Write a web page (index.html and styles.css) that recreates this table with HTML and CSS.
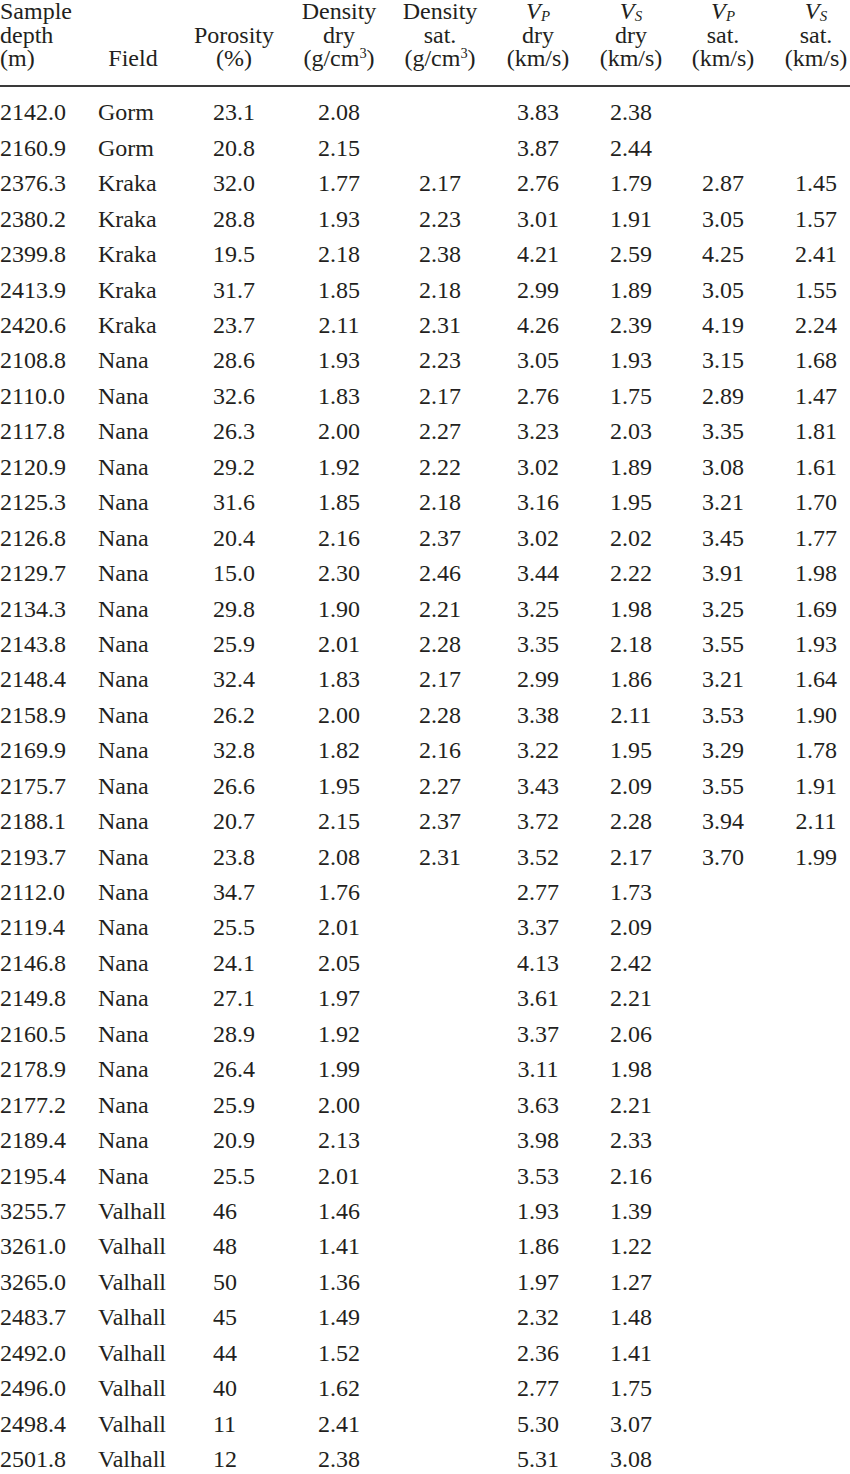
FILE: index.html
```html
<!DOCTYPE html>
<html>
<head>
<meta charset="utf-8">
<link rel="stylesheet" href="styles.css">
</head>
<body>
<div class="table">
  <div class="row head">
    <div class="c c1">Sample<br>depth<br>(m)</div>
    <div class="c c2">Field</div>
    <div class="c c3">Porosity<br>(%)</div>
    <div class="c c4">Density<br>dry<br>(g/cm<sup>3</sup>)</div>
    <div class="c c5">Density<br>sat.<br>(g/cm<sup>3</sup>)</div>
    <div class="c c6"><i>V</i><sub>P</sub><br>dry<br>(km/s)</div>
    <div class="c c7"><i>V</i><sub>S</sub><br>dry<br>(km/s)</div>
    <div class="c c8"><i>V</i><sub>P</sub><br>sat.<br>(km/s)</div>
    <div class="c c9"><i>V</i><sub>S</sub><br>sat.<br>(km/s)</div>
  </div>
  <div class="rule"></div>
  <div class="body">
    <div class="row"><div class="c c1">2142.0</div><div class="c c2">Gorm</div><div class="c c3">23.1</div><div class="c c4">2.08</div><div class="c c5"></div><div class="c c6">3.83</div><div class="c c7">2.38</div><div class="c c8"></div><div class="c c9"></div></div>
    <div class="row"><div class="c c1">2160.9</div><div class="c c2">Gorm</div><div class="c c3">20.8</div><div class="c c4">2.15</div><div class="c c5"></div><div class="c c6">3.87</div><div class="c c7">2.44</div><div class="c c8"></div><div class="c c9"></div></div>
    <div class="row"><div class="c c1">2376.3</div><div class="c c2">Kraka</div><div class="c c3">32.0</div><div class="c c4">1.77</div><div class="c c5">2.17</div><div class="c c6">2.76</div><div class="c c7">1.79</div><div class="c c8">2.87</div><div class="c c9">1.45</div></div>
    <div class="row"><div class="c c1">2380.2</div><div class="c c2">Kraka</div><div class="c c3">28.8</div><div class="c c4">1.93</div><div class="c c5">2.23</div><div class="c c6">3.01</div><div class="c c7">1.91</div><div class="c c8">3.05</div><div class="c c9">1.57</div></div>
    <div class="row"><div class="c c1">2399.8</div><div class="c c2">Kraka</div><div class="c c3">19.5</div><div class="c c4">2.18</div><div class="c c5">2.38</div><div class="c c6">4.21</div><div class="c c7">2.59</div><div class="c c8">4.25</div><div class="c c9">2.41</div></div>
    <div class="row"><div class="c c1">2413.9</div><div class="c c2">Kraka</div><div class="c c3">31.7</div><div class="c c4">1.85</div><div class="c c5">2.18</div><div class="c c6">2.99</div><div class="c c7">1.89</div><div class="c c8">3.05</div><div class="c c9">1.55</div></div>
    <div class="row"><div class="c c1">2420.6</div><div class="c c2">Kraka</div><div class="c c3">23.7</div><div class="c c4">2.11</div><div class="c c5">2.31</div><div class="c c6">4.26</div><div class="c c7">2.39</div><div class="c c8">4.19</div><div class="c c9">2.24</div></div>
    <div class="row"><div class="c c1">2108.8</div><div class="c c2">Nana</div><div class="c c3">28.6</div><div class="c c4">1.93</div><div class="c c5">2.23</div><div class="c c6">3.05</div><div class="c c7">1.93</div><div class="c c8">3.15</div><div class="c c9">1.68</div></div>
    <div class="row"><div class="c c1">2110.0</div><div class="c c2">Nana</div><div class="c c3">32.6</div><div class="c c4">1.83</div><div class="c c5">2.17</div><div class="c c6">2.76</div><div class="c c7">1.75</div><div class="c c8">2.89</div><div class="c c9">1.47</div></div>
    <div class="row"><div class="c c1">2117.8</div><div class="c c2">Nana</div><div class="c c3">26.3</div><div class="c c4">2.00</div><div class="c c5">2.27</div><div class="c c6">3.23</div><div class="c c7">2.03</div><div class="c c8">3.35</div><div class="c c9">1.81</div></div>
    <div class="row"><div class="c c1">2120.9</div><div class="c c2">Nana</div><div class="c c3">29.2</div><div class="c c4">1.92</div><div class="c c5">2.22</div><div class="c c6">3.02</div><div class="c c7">1.89</div><div class="c c8">3.08</div><div class="c c9">1.61</div></div>
    <div class="row"><div class="c c1">2125.3</div><div class="c c2">Nana</div><div class="c c3">31.6</div><div class="c c4">1.85</div><div class="c c5">2.18</div><div class="c c6">3.16</div><div class="c c7">1.95</div><div class="c c8">3.21</div><div class="c c9">1.70</div></div>
    <div class="row"><div class="c c1">2126.8</div><div class="c c2">Nana</div><div class="c c3">20.4</div><div class="c c4">2.16</div><div class="c c5">2.37</div><div class="c c6">3.02</div><div class="c c7">2.02</div><div class="c c8">3.45</div><div class="c c9">1.77</div></div>
    <div class="row"><div class="c c1">2129.7</div><div class="c c2">Nana</div><div class="c c3">15.0</div><div class="c c4">2.30</div><div class="c c5">2.46</div><div class="c c6">3.44</div><div class="c c7">2.22</div><div class="c c8">3.91</div><div class="c c9">1.98</div></div>
    <div class="row"><div class="c c1">2134.3</div><div class="c c2">Nana</div><div class="c c3">29.8</div><div class="c c4">1.90</div><div class="c c5">2.21</div><div class="c c6">3.25</div><div class="c c7">1.98</div><div class="c c8">3.25</div><div class="c c9">1.69</div></div>
    <div class="row"><div class="c c1">2143.8</div><div class="c c2">Nana</div><div class="c c3">25.9</div><div class="c c4">2.01</div><div class="c c5">2.28</div><div class="c c6">3.35</div><div class="c c7">2.18</div><div class="c c8">3.55</div><div class="c c9">1.93</div></div>
    <div class="row"><div class="c c1">2148.4</div><div class="c c2">Nana</div><div class="c c3">32.4</div><div class="c c4">1.83</div><div class="c c5">2.17</div><div class="c c6">2.99</div><div class="c c7">1.86</div><div class="c c8">3.21</div><div class="c c9">1.64</div></div>
    <div class="row"><div class="c c1">2158.9</div><div class="c c2">Nana</div><div class="c c3">26.2</div><div class="c c4">2.00</div><div class="c c5">2.28</div><div class="c c6">3.38</div><div class="c c7">2.11</div><div class="c c8">3.53</div><div class="c c9">1.90</div></div>
    <div class="row"><div class="c c1">2169.9</div><div class="c c2">Nana</div><div class="c c3">32.8</div><div class="c c4">1.82</div><div class="c c5">2.16</div><div class="c c6">3.22</div><div class="c c7">1.95</div><div class="c c8">3.29</div><div class="c c9">1.78</div></div>
    <div class="row"><div class="c c1">2175.7</div><div class="c c2">Nana</div><div class="c c3">26.6</div><div class="c c4">1.95</div><div class="c c5">2.27</div><div class="c c6">3.43</div><div class="c c7">2.09</div><div class="c c8">3.55</div><div class="c c9">1.91</div></div>
    <div class="row"><div class="c c1">2188.1</div><div class="c c2">Nana</div><div class="c c3">20.7</div><div class="c c4">2.15</div><div class="c c5">2.37</div><div class="c c6">3.72</div><div class="c c7">2.28</div><div class="c c8">3.94</div><div class="c c9">2.11</div></div>
    <div class="row"><div class="c c1">2193.7</div><div class="c c2">Nana</div><div class="c c3">23.8</div><div class="c c4">2.08</div><div class="c c5">2.31</div><div class="c c6">3.52</div><div class="c c7">2.17</div><div class="c c8">3.70</div><div class="c c9">1.99</div></div>
    <div class="row"><div class="c c1">2112.0</div><div class="c c2">Nana</div><div class="c c3">34.7</div><div class="c c4">1.76</div><div class="c c5"></div><div class="c c6">2.77</div><div class="c c7">1.73</div><div class="c c8"></div><div class="c c9"></div></div>
    <div class="row"><div class="c c1">2119.4</div><div class="c c2">Nana</div><div class="c c3">25.5</div><div class="c c4">2.01</div><div class="c c5"></div><div class="c c6">3.37</div><div class="c c7">2.09</div><div class="c c8"></div><div class="c c9"></div></div>
    <div class="row"><div class="c c1">2146.8</div><div class="c c2">Nana</div><div class="c c3">24.1</div><div class="c c4">2.05</div><div class="c c5"></div><div class="c c6">4.13</div><div class="c c7">2.42</div><div class="c c8"></div><div class="c c9"></div></div>
    <div class="row"><div class="c c1">2149.8</div><div class="c c2">Nana</div><div class="c c3">27.1</div><div class="c c4">1.97</div><div class="c c5"></div><div class="c c6">3.61</div><div class="c c7">2.21</div><div class="c c8"></div><div class="c c9"></div></div>
    <div class="row"><div class="c c1">2160.5</div><div class="c c2">Nana</div><div class="c c3">28.9</div><div class="c c4">1.92</div><div class="c c5"></div><div class="c c6">3.37</div><div class="c c7">2.06</div><div class="c c8"></div><div class="c c9"></div></div>
    <div class="row"><div class="c c1">2178.9</div><div class="c c2">Nana</div><div class="c c3">26.4</div><div class="c c4">1.99</div><div class="c c5"></div><div class="c c6">3.11</div><div class="c c7">1.98</div><div class="c c8"></div><div class="c c9"></div></div>
    <div class="row"><div class="c c1">2177.2</div><div class="c c2">Nana</div><div class="c c3">25.9</div><div class="c c4">2.00</div><div class="c c5"></div><div class="c c6">3.63</div><div class="c c7">2.21</div><div class="c c8"></div><div class="c c9"></div></div>
    <div class="row"><div class="c c1">2189.4</div><div class="c c2">Nana</div><div class="c c3">20.9</div><div class="c c4">2.13</div><div class="c c5"></div><div class="c c6">3.98</div><div class="c c7">2.33</div><div class="c c8"></div><div class="c c9"></div></div>
    <div class="row"><div class="c c1">2195.4</div><div class="c c2">Nana</div><div class="c c3">25.5</div><div class="c c4">2.01</div><div class="c c5"></div><div class="c c6">3.53</div><div class="c c7">2.16</div><div class="c c8"></div><div class="c c9"></div></div>
    <div class="row"><div class="c c1">3255.7</div><div class="c c2">Valhall</div><div class="c c3">46</div><div class="c c4">1.46</div><div class="c c5"></div><div class="c c6">1.93</div><div class="c c7">1.39</div><div class="c c8"></div><div class="c c9"></div></div>
    <div class="row"><div class="c c1">3261.0</div><div class="c c2">Valhall</div><div class="c c3">48</div><div class="c c4">1.41</div><div class="c c5"></div><div class="c c6">1.86</div><div class="c c7">1.22</div><div class="c c8"></div><div class="c c9"></div></div>
    <div class="row"><div class="c c1">3265.0</div><div class="c c2">Valhall</div><div class="c c3">50</div><div class="c c4">1.36</div><div class="c c5"></div><div class="c c6">1.97</div><div class="c c7">1.27</div><div class="c c8"></div><div class="c c9"></div></div>
    <div class="row"><div class="c c1">2483.7</div><div class="c c2">Valhall</div><div class="c c3">45</div><div class="c c4">1.49</div><div class="c c5"></div><div class="c c6">2.32</div><div class="c c7">1.48</div><div class="c c8"></div><div class="c c9"></div></div>
    <div class="row"><div class="c c1">2492.0</div><div class="c c2">Valhall</div><div class="c c3">44</div><div class="c c4">1.52</div><div class="c c5"></div><div class="c c6">2.36</div><div class="c c7">1.41</div><div class="c c8"></div><div class="c c9"></div></div>
    <div class="row"><div class="c c1">2496.0</div><div class="c c2">Valhall</div><div class="c c3">40</div><div class="c c4">1.62</div><div class="c c5"></div><div class="c c6">2.77</div><div class="c c7">1.75</div><div class="c c8"></div><div class="c c9"></div></div>
    <div class="row"><div class="c c1">2498.4</div><div class="c c2">Valhall</div><div class="c c3">11</div><div class="c c4">2.41</div><div class="c c5"></div><div class="c c6">5.30</div><div class="c c7">3.07</div><div class="c c8"></div><div class="c c9"></div></div>
    <div class="row"><div class="c c1">2501.8</div><div class="c c2">Valhall</div><div class="c c3">12</div><div class="c c4">2.38</div><div class="c c5"></div><div class="c c6">5.31</div><div class="c c7">3.08</div><div class="c c8"></div><div class="c c9"></div></div>
  </div>
</div>
</body>
</html>
```

FILE: styles.css
```css
html, body {
  margin: 0;
  padding: 0;
  background: #ffffff;
  overflow: hidden;
}

body {
  font-family: "Liberation Serif", "Times New Roman", serif;
  font-size: 24px;
  color: #231f20;
}

.table {
  width: 850px;
}

.row {
  display: grid;
  grid-template-columns: 88px 90px 112px 98px 104px 92px 94px 90px 82px;
  line-height: 35.45px;
  height: 35.45px;
}

.head {
  line-height: 23.5px;
  height: 70.5px;
  align-items: end;
}

.c {
  white-space: nowrap;
  text-align: center;
}

.c1 {
  text-align: left;
}

.body .c2 {
  text-align: left;
  padding-left: 10px;
}

.body .c3 {
  text-align: left;
  padding-left: 35px;
}

.c9 {
  padding-left: 14px;
}

.rule {
  height: 2px;
  background: #3a3a3a;
  margin-top: 14.5px;
  margin-bottom: 8.4px;
}

i {
  font-style: italic;
}

sub {
  font-style: italic;
  font-size: 0.62em;
  line-height: 0;
  vertical-align: -0.12em;
  margin-left: 0.02em;
}

sup {
  font-size: 0.6em;
  line-height: 0;
  vertical-align: 0.55em;
}
```
